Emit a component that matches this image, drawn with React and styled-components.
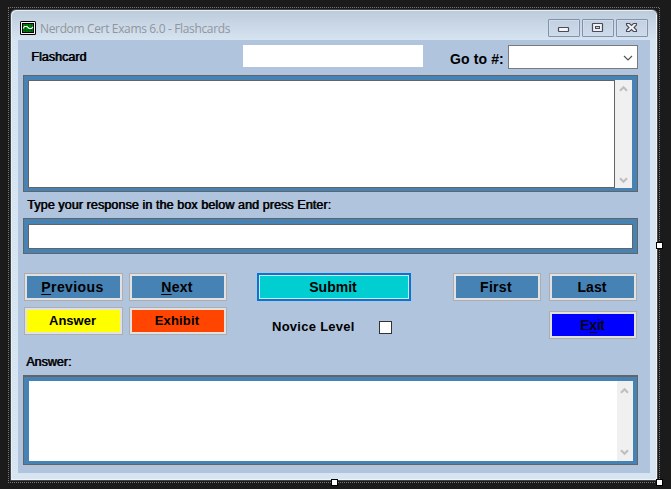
import React from "react";
import styled, { createGlobalStyle } from "styled-components";

const GlobalStyle = createGlobalStyle`
  * { box-sizing: border-box; }
  html, body, #root { margin: 0; height: 100%; overflow: hidden; }
  body { background: #1b1b1b; color: #000; font-family: "Liberation Sans", Arial, sans-serif; }
  button, input, textarea, select { font: inherit; border-radius: 0; outline: 0; }
`;

const Desktop = styled.main`
  position: relative;
  width: 671px;
  height: 489px;
  padding: 9px 0 0 10px;
  background: #1b1b1b;
`;

const Selection = styled.svg`
  position: absolute;
  inset: 0;
  pointer-events: none;
`;

const Window = styled.section`
  display: flex;
  flex-direction: column;
  width: 648px;
  height: 472px;
  padding: 0 7px 7px;
  border: 1px solid #464749;
  border-radius: 6px 6px 0 0;
  background: linear-gradient(#bccbdb 0, #d6e3f1 30px, #d7e4f2 31px);
  box-shadow: inset 1px 1px #e9eef5, inset -1px -1px #eef3f9;
`;

const TitleBar = styled.header`
  display: flex;
  flex: 0 0 30px;
  align-items: flex-start;
  padding: 9px 2px 0 2px;
`;

const TitleIcon = styled.svg`
  margin-top: 2px;
  flex: none;
`;

const Title = styled.h1`
  flex: 1;
  margin: 1px 0 0 4px;
  color: #91969b;
  font: 400 12px/17px "Open Sans", "Noto Sans", sans-serif;
  letter-spacing: ${(p) => p.$spacing}px;
  white-space: nowrap;
`;

const Controls = styled.div`
  display: flex;
  gap: 2px;
`;

const ControlButton = styled.button`
  display: block;
  width: 32px;
  height: 18px;
  padding: 0;
  border: 1px solid #8292ae;
  border-radius: 1px;
  background: linear-gradient(#c2d0e1, #cddbea);
  box-shadow: inset 0 0 0 1px #d0dcea;
  svg { display: block; }
`;

const Client = styled.div`
  flex: 1;
  padding: 5px 12px 0 5px;
  background: #b0c4de;
`;

const TopRow = styled.div`
  display: flex;
  height: 30px;
`;

const Label = styled.label`
  display: block;
  flex: none;
  width: ${(p) => p.$width || "auto"};
  margin: ${(p) => p.$margin || 0};
  font-size: ${(p) => p.$size || 13}px;
  font-weight: 700;
  line-height: 16px;
  letter-spacing: ${(p) => p.$spacing || 0}px;
  white-space: nowrap;
`;

const SmearedLabel = styled(Label)`
  font-weight: 400;
  text-shadow: 0.7px 0 #000;
`;

const CardField = styled.input`
  width: 180px;
  height: 22px;
  margin-right: 27px;
  padding: 0 3px;
  border: 0;
  background: #fff;
`;

const Combo = styled.div`
  display: flex;
  justify-content: flex-end;
  width: 130px;
  height: 24px;
  border: 1px solid #7a7a7a;
  background: #fff;
`;

const Panel = styled.div`
  display: flex;
  height: ${(p) => p.$height}px;
  padding: ${(p) => p.$padding};
  border: 1px solid #646464;
  border-top-width: ${(p) => p.$top || 1}px;
  background: #4682b4;
`;

const TextBox = styled.textarea`
  flex: 1;
  min-width: 0;
  height: 100%;
  padding: 2px;
  border: ${(p) => (p.$framed ? "1px solid #646464" : "0")};
  background: #fff;
  resize: none;
  overflow: hidden;
`;

const Scrollbar = styled.div`
  display: flex;
  flex-direction: column;
  justify-content: space-between;
  width: ${(p) => p.$width}px;
  padding: ${(p) => p.$padding};
  background: #f0f0f0;
  svg { display: block; }
`;

const PromptRow = styled.div`
  height: 26px;
  padding: 5px 0 0 4px;
`;

const Actions = styled.div`
  display: flex;
  align-items: flex-start;
  height: 81px;
  margin-top: 19px;
  padding: 0 1px;
`;

const PagingGrid = styled.div`
  display: grid;
  grid-template-columns: 99px 98px;
  grid-auto-rows: 28px;
  gap: 6px;
`;

const SubmitGroup = styled.div`
  width: 154px;
  margin: 0 42px 0 30px;
`;

const JumpGrid = styled.div`
  display: grid;
  grid-template-columns: 88px 88px;
  grid-auto-rows: 28px;
  gap: 10px 8px;
`;

const Button = styled.button`
  width: 100%;
  height: 28px;
  grid-column: ${(p) => p.$column || "auto"};
  padding: 0 2px 1px 0;
  border: ${(p) => (p.$primary ? "2px solid #0078d7" : "1px solid #adadad")};
  background: ${(p) => p.$color};
  box-shadow: inset 0 0 0 ${(p) => (p.$primary ? 1 : 2)}px #e1e1e1;
  color: #000;
  font-size: ${(p) => p.$size || 14}px;
  font-weight: 700;
  line-height: 22px;
  letter-spacing: ${(p) => p.$spacing || 0}px;
  white-space: nowrap;
  u { text-decoration-thickness: 1px; text-underline-offset: 2px; text-decoration-skip-ink: none; }
`;

const Light = styled.span`
  font-weight: 400;
  text-shadow: 0.5px 0 #000;
`;

const Novice = styled.div`
  display: flex;
  margin: 18px 0 0 15px;
`;

const Checkbox = styled.input`
  appearance: none;
  flex: none;
  width: 13px;
  height: 13px;
  margin: 2px 0 0;
  border: 1px solid #333;
  background: #fff;
`;

const AnswerRow = styled.div`
  height: 21px;
  padding-left: 3px;
`;

const Arrow = ({ down }) => (
  <svg width="9" height="7" viewBox="0 0 9 7">
    <path d={down ? "M1 1.3 4.5 4.8 8 1.3" : "M1 5.7 4.5 2.2 8 5.7"} fill="none" stroke="#bfbfbf" strokeWidth="2.2" />
  </svg>
);

const Handle = ({ x, y }) => (
  <g shapeRendering="crispEdges">
    <rect x={x} y={y} width="7" height="7" fill="#000" />
    <rect x={x + 1} y={y + 1} width="5" height="5" fill="#fff" />
  </g>
);

export default function App() {
  return (
    <Desktop>
      <GlobalStyle />
      <Window>
        <TitleBar>
          <TitleIcon width="16" height="14" viewBox="0 0 16 14">
            <rect width="16" height="14" rx="1.5" fill="#000" />
            <rect x="1.5" y="1.5" width="13" height="11" fill="none" stroke="#f4f4f4" />
            <rect x="3" y="3" width="10" height="8" fill="#008012" />
            <path d="M3 9.5h10M5.5 3v8M8.5 3v8M11.5 3v8" stroke="#004a0a" strokeWidth=".6" />
            <path d="M3 7.5 4.5 5.5H7L9 7.5H11.5L13 6" fill="none" stroke="#fff" strokeWidth="1.1" />
          </TitleIcon>
          <Title $spacing={-0.35}>Nerdom Cert Exams 6.0 - Flashcards</Title>
          <Controls>
            <ControlButton aria-label="Minimize">
              <svg width="30" height="16"><rect x="9.5" y="7.5" width="10" height="4" rx="0.5" fill="#f5f5f5" stroke="#484b5d" strokeWidth="1.2" /></svg>
            </ControlButton>
            <ControlButton aria-label="Maximize">
              <svg width="30" height="16">
                <rect x="9.5" y="3.5" width="10" height="8" rx="0.5" fill="#f1f1f1" stroke="#484b5d" strokeWidth="1.2" />
                <rect x="12.5" y="6.5" width="4" height="2" fill="#c7d4e5" stroke="#484b5d" />
              </svg>
            </ControlButton>
            <ControlButton aria-label="Close">
              <svg width="30" height="16">
                <path d="M9.5 3.5h3l2 2 2-2h3v1.5L17 7.5l2.5 2.5v1.5h-3l-2-2-2 2h-3V10L12 7.5 9.5 5z" fill="#f3f3f3" stroke="#484b5d" strokeWidth="1.1" />
              </svg>
            </ControlButton>
          </Controls>
        </TitleBar>
        <Client>
          <TopRow>
            <SmearedLabel $width="212px" $margin="4px 0 0 8px" $size={12.5} $spacing={0.05}>Flashcard</SmearedLabel>
            <CardField />
            <Label $width="58px" $margin="6px 0 0" $size={14} $spacing={0.12}>Go to #:</Label>
            <Combo>
              <svg width="17" height="22"><path d="m4 10 4 4 4-4" fill="none" stroke="#555" strokeWidth="1.2" /></svg>
            </Combo>
          </TopRow>
          <Panel $height={117} $padding="4px 5px 3px 4px">
            <TextBox $framed />
            <Scrollbar $width={17} $padding="5px 4px 4px 4px"><Arrow /><Arrow down /></Scrollbar>
          </Panel>
          <PromptRow><SmearedLabel $size={12.5} $spacing={0.1}>Type your response in the box below and press Enter:</SmearedLabel></PromptRow>
          <Panel $height={36} $padding="5px 4px 4px"><TextBox $framed rows="1" /></Panel>
          <Actions>
            <PagingGrid>
              <Button $color="#4682b4" $spacing={0.4}><u>P</u>revious</Button>
              <Button $color="#4682b4" $spacing={0.3}><u>N</u>ext</Button>
              <Button $color="#ff0" $size={13}>Answer</Button>
              <Button $color="#ff4500" $size={13} $spacing={0.15}>Exhibit</Button>
            </PagingGrid>
            <SubmitGroup>
              <Button $primary $color="#00ced1">Submit</Button>
              <Novice>
                <Label $width="107px" $spacing={0.27}>Novice Level</Label>
                <Checkbox type="checkbox" />
              </Novice>
            </SubmitGroup>
            <JumpGrid>
              <Button $color="#4682b4" $spacing={0.3}>First</Button>
              <Button $color="#4682b4" $spacing={0.1}>Last</Button>
              <Button $column="2" $color="#00f"><Light>E</Light><u>x</u><Light>it</Light></Button>
            </JumpGrid>
          </Actions>
          <AnswerRow><SmearedLabel $size={12.5}>Answer:</SmearedLabel></AnswerRow>
          <Panel $height={90} $top={2} $padding="4px 4px 3px 5px">
            <TextBox />
            <Scrollbar $width={16} $padding="6px 3px 5px 3px"><Arrow /><Arrow down /></Scrollbar>
          </Panel>
        </Client>
      </Window>
      <Selection width="671" height="489">
        <path d="M8 7.5H660M8 482.5H660M8.5 8V482M659.5 8V482" fill="none" stroke="#777" strokeDasharray="1 1" shapeRendering="crispEdges" />
        <Handle x={656} y={242} />
        <Handle x={331} y={479} />
        <Handle x={656} y={479} />
      </Selection>
    </Desktop>
  );
}
